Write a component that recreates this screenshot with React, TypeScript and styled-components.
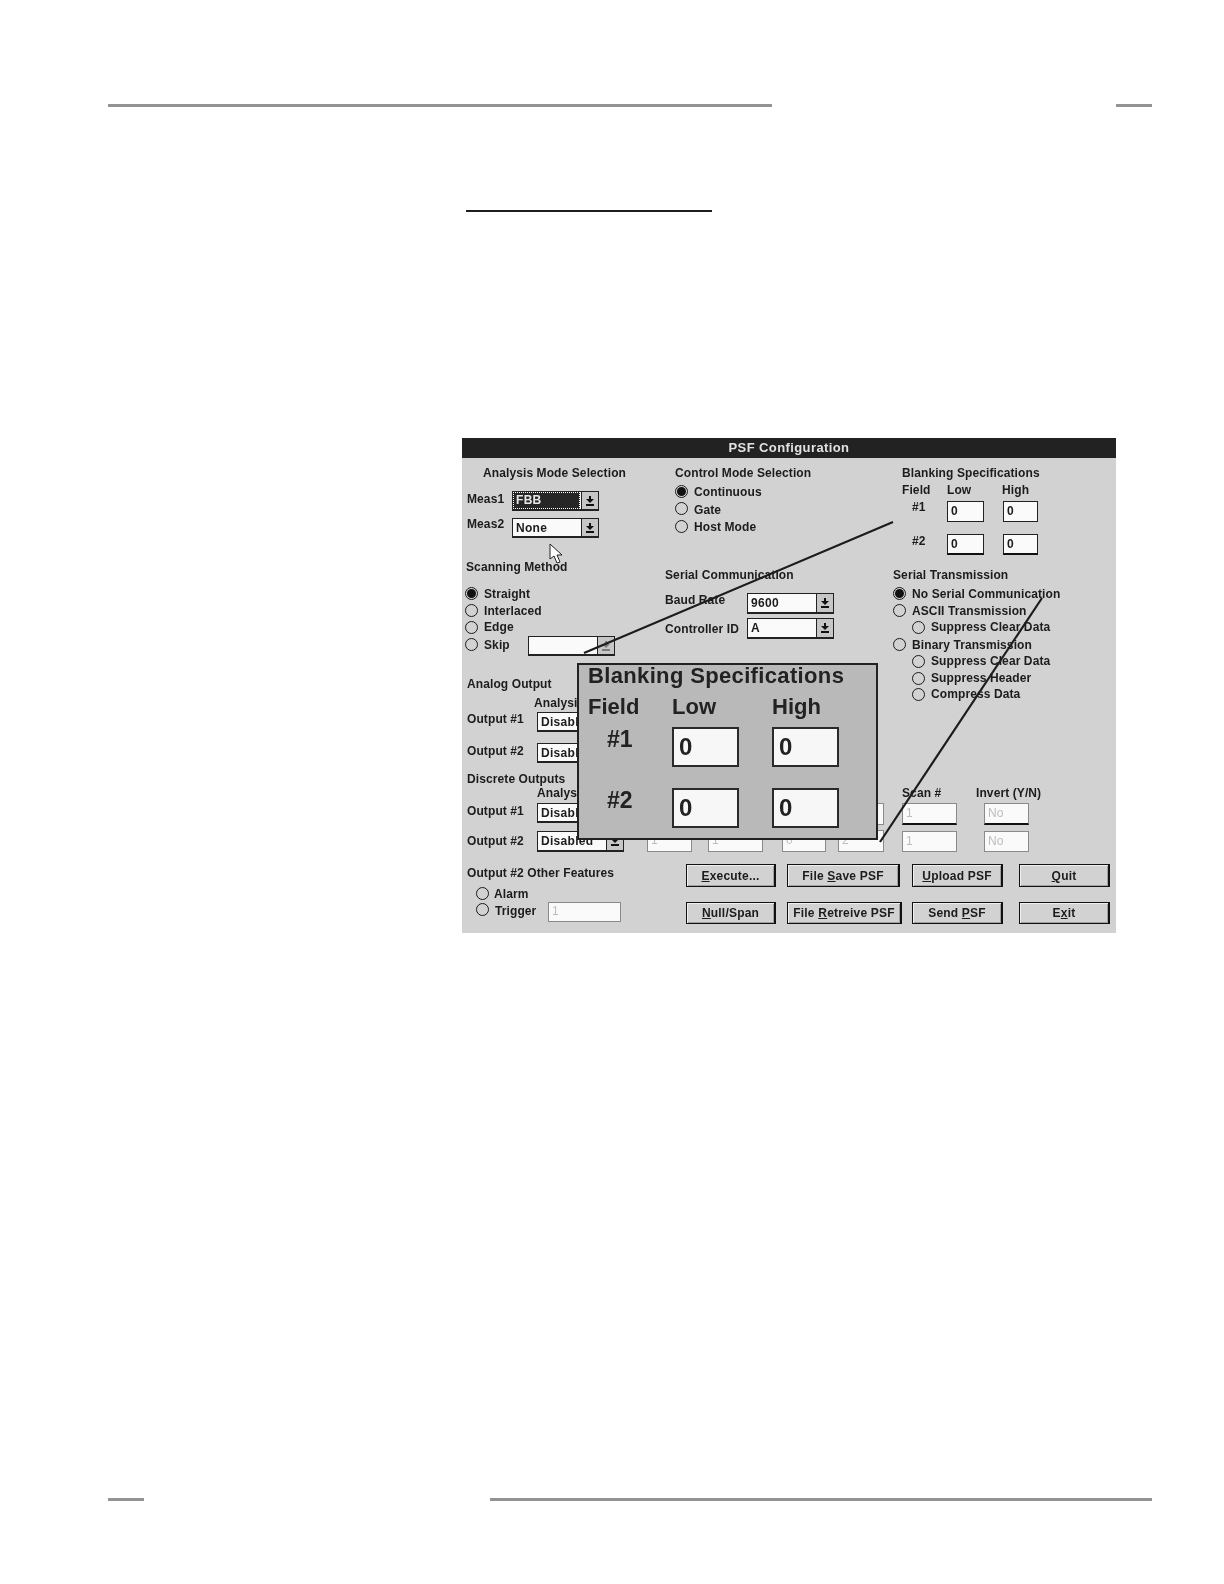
import React from "react";
import styled, { createGlobalStyle, css } from "styled-components";

const OX = 462;
const OY = 458;

const Global = createGlobalStyle`
  html, body { margin: 0; padding: 0; background: #fff; }
`;

type Pos = { $x: number; $y: number };
type Box = Pos & { $w: number; $h: number };

const at = css<Pos>`
  position: absolute;
  left: ${(p) => p.$x - OX}px;
  top: ${(p) => p.$y - OY}px;
`;
const sized = css<Box>`
  ${at}
  width: ${(p) => p.$w}px;
  height: ${(p) => p.$h}px;
  box-sizing: border-box;
`;

const Page = styled.div`
  width: 1224px;
  height: 1584px;
  box-sizing: border-box;
  padding: 104px 72px 0 108px;
  background: #fff;
  overflow: hidden;
`;
const RuleRow = styled.div<{ $mt?: number }>`
  display: flex;
  justify-content: space-between;
  margin-top: ${(p) => p.$mt ?? 0}px;
`;
const Rule = styled.div<{ $w: number }>`
  width: ${(p) => p.$w}px;
  height: 3px;
  background: #939393;
`;
const HeadingRule = styled.div`
  width: 246px;
  height: 2px;
  margin: 103px 0 0 358px;
  background: #1e1e1e;
`;
const Dialog = styled.div`
  width: 654px;
  height: 495px;
  margin: 226px 0 0 354px;
  display: flex;
  flex-direction: column;
  background: #d2d2d2;
  font-family: "Liberation Sans", Arial, sans-serif;
  font-size: 12px;
  font-weight: 700;
  color: #1c1c1c;
  filter: blur(0.35px);
`;
const TitleBar = styled.div`
  height: 20px;
  flex: none;
  background: #222;
  color: #e2e2e2;
  font-size: 13px;
  line-height: 20px;
  letter-spacing: 0.4px;
  text-align: center;
`;
const Canvas = styled.div`
  position: relative;
  flex: 1;
`;
const Label = styled.span<{ $x: number; $cy: number }>`
  position: absolute;
  left: ${(p) => p.$x - OX}px;
  top: ${(p) => p.$cy - OY - 7}px;
  line-height: 14px;
  letter-spacing: 0.1px;
  white-space: nowrap;
`;
const RadioDot = styled.span<Pos & { $on?: boolean }>`
  ${at}
  width: 13px;
  height: 13px;
  margin: -6px 0 0 -6px;
  box-sizing: border-box;
  border: 1px solid #1a1a1a;
  border-radius: 50%;
  &::after {
    content: "";
    display: ${(p) => (p.$on ? "block" : "none")};
    width: 9px;
    height: 9px;
    margin: 1px;
    border-radius: 50%;
    background: #111;
  }
`;
const Field = styled.div<Box & { $off?: boolean; $heavy?: boolean }>`
  ${sized}
  background: #fafafa;
  border: 1px solid ${(p) => (p.$off ? "#8a8a8a" : "#222")};
  border-bottom-width: ${(p) => (p.$heavy ? 2 : 1)}px;
  ${(p) => p.$heavy && "border-bottom-color: #111;"}
  color: ${(p) => (p.$off ? "#bdbdbd" : "#1c1c1c")};
  font-weight: ${(p) => (p.$off ? 400 : 700)};
  line-height: ${(p) => p.$h - 3}px;
  padding-left: 3px;
`;
const Combo = styled.div<Box>`
  ${sized}
  display: flex;
  background: #fafafa;
  border: 1px solid #222;
  border-bottom-width: 2px;
`;
const ComboValue = styled.div<{ $selected?: boolean }>`
  flex: 1;
  overflow: hidden;
  padding-left: 3px;
  line-height: 18px;
  letter-spacing: 0.3px;
  white-space: nowrap;
  ${(p) =>
    p.$selected &&
    css`
      margin: 0 1px 0 0;
      padding-left: 3px;
      line-height: 17px;
      background: #262626;
      color: #e8e8e8;
      outline: 1px dotted #fff;
      outline-offset: -1px;
    `}
`;
const ComboButton = styled.div`
  width: 16px;
  flex: none;
  display: flex;
  align-items: center;
  justify-content: center;
  border-left: 1px solid #222;
  background: #c6c6c6;
`;
const Arrow = styled.svg<{ $dim?: boolean }>`
  width: 8px;
  height: 10px;
  display: block;
  opacity: ${(p) => (p.$dim ? 0.4 : 1)};
`;
const PushButton = styled.div<Box>`
  ${sized}
  display: flex;
  align-items: center;
  justify-content: center;
  background: #d2d2d2;
  border: 1px solid #111;
  border-right-width: 2px;
  box-shadow: inset 1px 1px 0 #efefef, inset -1px -1px 0 #a0a0a0;
  letter-spacing: 0.2px;
  white-space: nowrap;
`;
const Leader = styled.svg`
  position: absolute;
  left: 0;
  top: 0;
  width: 654px;
  height: 475px;
  pointer-events: none;
`;
const Pointer = styled.svg<Pos>`
  ${at}
  width: 14px;
  height: 21px;
`;
const Popup = styled.div<Box>`
  ${sized}
  padding: 1px 0 0 9px;
  background: #b9b9b9;
  border: 2px solid #222;
  color: #222;
  font-size: 22px;
`;
const PopupTitle = styled.div`
  line-height: 20px;
  letter-spacing: 0.35px;
  white-space: nowrap;
`;
const PopupGrid = styled.div`
  display: grid;
  grid-template-columns: 84px 100px 67px;
  grid-template-rows: 30px 61px 41px;
  align-items: start;
  margin-top: 11px;
`;
const PopupHead = styled.div`
  line-height: 20px;
`;
const PopupRowLabel = styled.div`
  line-height: 20px;
  padding: 2px 0 0 19px;
  font-size: 23px;
`;
const PopupField = styled.div`
  width: 67px;
  height: 40px;
  box-sizing: border-box;
  padding-left: 5px;
  border: 2px solid #2a2a2a;
  background: #f7f7f7;
  font-size: 24px;
  line-height: 36px;
`;

const labels: [number, number, string][] = [
  [483, 473, "Analysis Mode Selection"],
  [467, 499, "Meas1"],
  [467, 524, "Meas2"],
  [466, 567, "Scanning Method"],
  [484, 594, "Straight"],
  [484, 611, "Interlaced"],
  [484, 627, "Edge"],
  [484, 645, "Skip"],
  [675, 473, "Control Mode Selection"],
  [694, 492, "Continuous"],
  [694, 510, "Gate"],
  [694, 527, "Host Mode"],
  [665, 575, "Serial Communication"],
  [665, 600, "Baud Rate"],
  [665, 629, "Controller ID"],
  [902, 473, "Blanking Specifications"],
  [902, 490, "Field"],
  [947, 490, "Low"],
  [1002, 490, "High"],
  [912, 507, "#1"],
  [912, 541, "#2"],
  [893, 575, "Serial Transmission"],
  [912, 594, "No Serial Communication"],
  [912, 611, "ASCII Transmission"],
  [931, 627, "Suppress Clear Data"],
  [912, 645, "Binary Transmission"],
  [931, 661, "Suppress Clear Data"],
  [931, 678, "Suppress Header"],
  [931, 694, "Compress Data"],
  [467, 684, "Analog Output"],
  [534, 703, "Analysis"],
  [467, 719, "Output #1"],
  [467, 751, "Output #2"],
  [467, 779, "Discrete Outputs"],
  [537, 793, "Analysis"],
  [467, 811, "Output #1"],
  [467, 841, "Output #2"],
  [902, 793, "Scan #"],
  [976, 793, "Invert (Y/N)"],
  [467, 873, "Output #2 Other Features"],
  [494, 894, "Alarm"],
  [495, 911, "Trigger"],
];

const radios: [number, number, boolean?][] = [
  [471, 593, true],
  [471, 610],
  [471, 627],
  [471, 644],
  [681, 491, true],
  [681, 508],
  [681, 526],
  [899, 593, true],
  [899, 610],
  [918, 627],
  [899, 644],
  [918, 661],
  [918, 678],
  [918, 694],
  [482, 893],
  [482, 909],
];

const fields: [number, number, number, number, string, boolean?, boolean?][] = [
  [947, 501, 37, 21, "0"],
  [1003, 501, 35, 21, "0"],
  [947, 534, 37, 21, "0", false, true],
  [1003, 534, 35, 21, "0", false, true],
  [838, 803, 46, 22, "", true],
  [902, 803, 55, 22, "1", true, true],
  [984, 803, 45, 22, "No", true, true],
  [647, 830, 45, 22, "1", true],
  [708, 830, 55, 22, "1", true],
  [782, 830, 44, 22, "0", true],
  [838, 830, 46, 22, "2", true],
  [902, 831, 55, 21, "1", true],
  [984, 831, 45, 21, "No", true],
  [548, 902, 73, 20, "1", true],
];

const combos: [number, number, number, number, string, boolean?][] = [
  [512, 491, 87, 20, "FBB", true],
  [512, 518, 87, 20, "None"],
  [747, 593, 87, 21, "9600"],
  [747, 618, 87, 21, "A"],
  [537, 712, 87, 20, "Disabled"],
  [537, 743, 87, 20, "Disabled"],
  [537, 803, 87, 20, "Disabled"],
  [537, 831, 87, 21, "Disabled"],
];

const buttons: [number, number, number, string, string, string][] = [
  [686, 864, 90, "", "E", "xecute..."],
  [787, 864, 113, "File ", "S", "ave PSF"],
  [912, 864, 91, "", "U", "pload PSF"],
  [1019, 864, 91, "", "Q", "uit"],
  [686, 902, 90, "", "N", "ull/Span"],
  [787, 902, 115, "File ", "R", "etreive PSF"],
  [912, 902, 91, "Send ", "P", "SF"],
  [1019, 902, 91, "E", "x", "it"],
];

const DownArrow = ({ dim }: { dim?: boolean }) => (
  <Arrow viewBox="0 0 8 10" $dim={dim}>
    <path d="M3 0h2v3h3L4 7 0 3h3z" fill="#111" />
    <rect x="0" y="8" width="8" height="2" fill="#111" />
  </Arrow>
);

export default function App() {
  return (
    <Page>
      <Global />
      <RuleRow>
        <Rule $w={664} />
        <Rule $w={36} />
      </RuleRow>
      <HeadingRule />
      <Dialog>
        <TitleBar>PSF Configuration</TitleBar>
        <Canvas>
          {labels.map(([x, cy, text], i) => (
            <Label key={i} $x={x} $cy={cy}>
              {text}
            </Label>
          ))}
          {radios.map(([x, y, on], i) => (
            <RadioDot key={i} $x={x} $y={y} $on={on} />
          ))}
          {combos.map(([x, y, w, h, value, selected], i) => (
            <Combo key={i} $x={x} $y={y} $w={w} $h={h}>
              <ComboValue $selected={selected}>{value}</ComboValue>
              <ComboButton>
                <DownArrow />
              </ComboButton>
            </Combo>
          ))}
          <Combo $x={528} $y={636} $w={87} $h={20}>
            <ComboValue />
            <ComboButton>
              <DownArrow dim />
            </ComboButton>
          </Combo>
          {fields.map(([x, y, w, h, value, off, heavy], i) => (
            <Field key={i} $x={x} $y={y} $w={w} $h={h} $off={off} $heavy={heavy}>
              {value}
            </Field>
          ))}
          {buttons.map(([x, y, w, pre, key, post], i) => (
            <PushButton key={i} $x={x} $y={y} $w={w} $h={y === 864 ? 23 : 22}>
              <span>
                {pre}
                <u>{key}</u>
                {post}
              </span>
            </PushButton>
          ))}
          <Leader viewBox="0 0 654 475">
            <line x1={893 - OX} y1={522 - OY} x2={584 - OX} y2={653 - OY} stroke="#1c1c1c" strokeWidth="2.2" />
            <line x1={1042 - OX} y1={598 - OY} x2={880 - OX} y2={842 - OY} stroke="#1c1c1c" strokeWidth="2.2" />
          </Leader>
          <Pointer $x={549} $y={543} viewBox="0 0 14 21">
            <path d="M1 1v15l4-3 3 7 3-1-3-7h5z" fill="#fff" stroke="#222" strokeWidth="1" />
          </Pointer>
          <Popup $x={577} $y={663} $w={301} $h={177}>
            <PopupTitle>Blanking Specifications</PopupTitle>
            <PopupGrid>
              <PopupHead>Field</PopupHead>
              <PopupHead>Low</PopupHead>
              <PopupHead>High</PopupHead>
              <PopupRowLabel>#1</PopupRowLabel>
              <PopupField>0</PopupField>
              <PopupField>0</PopupField>
              <PopupRowLabel>#2</PopupRowLabel>
              <PopupField>0</PopupField>
              <PopupField>0</PopupField>
            </PopupGrid>
          </Popup>
        </Canvas>
      </Dialog>
      <RuleRow $mt={565}>
        <Rule $w={36} />
        <Rule $w={662} />
      </RuleRow>
    </Page>
  );
}
